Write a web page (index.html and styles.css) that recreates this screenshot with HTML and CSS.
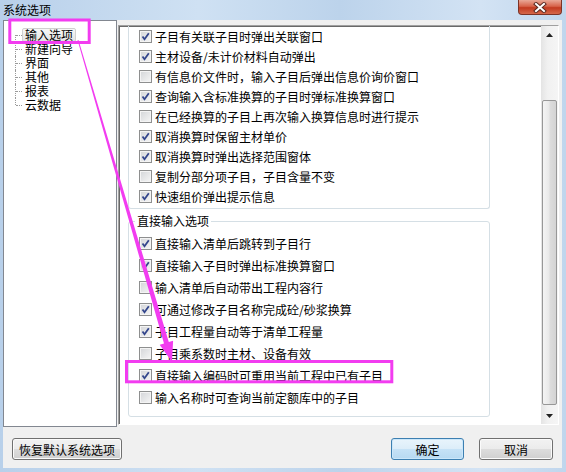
FILE: index.html
```html
<!DOCTYPE html>
<html>
<head>
    <meta charset="utf-8">
    <title>系统选项</title>
    <link rel="stylesheet" href="styles.css">
</head>
<body>
<div class="window">
    <div class="titlebar">
        <span class="title">系统选项</span>
        <div class="close-btn">
            <svg width="14" height="11" viewBox="0 0 14 11">
                <path d="M3 2 L11 9 M11 2 L3 9" stroke="#5b2a22" stroke-width="4" stroke-linecap="square"/>
                <path d="M3 2 L11 9 M11 2 L3 9" stroke="#fff" stroke-width="2" stroke-linecap="square"/>
            </svg>
        </div>
    </div>
    <div class="client">
        <div class="main">
            <div class="tree">
                <ul>
                    <li><span class="node selected">输入选项</span></li>
                    <li><span class="node">新建向导</span></li>
                    <li><span class="node">界面</span></li>
                    <li><span class="node">其他</span></li>
                    <li><span class="node">报表</span></li>
                    <li><span class="node">云数据</span></li>
                </ul>
            </div>
            <div class="panel">
                <div class="content">
                    <div class="group group-first">
                        <div class="row"><span class="cb"><svg viewBox="0 0 11 11"><path d="M2.5 5.5 L4.5 8.2 L8.8 2.2"/></svg></span>子目有关联子目时弹出关联窗口</div>
                        <div class="row"><span class="cb"><svg viewBox="0 0 11 11"><path d="M2.5 5.5 L4.5 8.2 L8.8 2.2"/></svg></span>主材设备/未计价材料自动弹出</div>
                        <div class="row"><span class="cb"></span>有信息价文件时，输入子目后弹出信息价询价窗口</div>
                        <div class="row"><span class="cb"><svg viewBox="0 0 11 11"><path d="M2.5 5.5 L4.5 8.2 L8.8 2.2"/></svg></span>查询输入含标准换算的子目时弹标准换算窗口</div>
                        <div class="row"><span class="cb"></span>在已经换算的子目上再次输入换算信息时进行提示</div>
                        <div class="row"><span class="cb"><svg viewBox="0 0 11 11"><path d="M2.5 5.5 L4.5 8.2 L8.8 2.2"/></svg></span>取消换算时保留主材单价</div>
                        <div class="row"><span class="cb"><svg viewBox="0 0 11 11"><path d="M2.5 5.5 L4.5 8.2 L8.8 2.2"/></svg></span>取消换算时弹出选择范围窗体</div>
                        <div class="row"><span class="cb"></span>复制分部分项子目，子目含量不变</div>
                        <div class="row"><span class="cb"><svg viewBox="0 0 11 11"><path d="M2.5 5.5 L4.5 8.2 L8.8 2.2"/></svg></span>快速组价弹出提示信息</div>
                    </div>
                    <fieldset class="group group-direct">
                        <legend>直接输入选项</legend>
                        <div class="rows">
                            <div class="row"><span class="cb"><svg viewBox="0 0 11 11"><path d="M2.5 5.5 L4.5 8.2 L8.8 2.2"/></svg></span>直接输入清单后跳转到子目行</div>
                            <div class="row"><span class="cb"><svg viewBox="0 0 11 11"><path d="M2.5 5.5 L4.5 8.2 L8.8 2.2"/></svg></span>直接输入子目时弹出标准换算窗口</div>
                            <div class="row"><span class="cb"></span>输入清单后自动带出工程内容行</div>
                            <div class="row"><span class="cb"><svg viewBox="0 0 11 11"><path d="M2.5 5.5 L4.5 8.2 L8.8 2.2"/></svg></span>可通过修改子目名称完成砼/砂浆换算</div>
                            <div class="row"><span class="cb"><svg viewBox="0 0 11 11"><path d="M2.5 5.5 L4.5 8.2 L8.8 2.2"/></svg></span>子目工程量自动等于清单工程量</div>
                            <div class="row"><span class="cb"></span>子目乘系数时主材、设备有效</div>
                            <div class="row"><span class="cb"><svg viewBox="0 0 11 11"><path d="M2.5 5.5 L4.5 8.2 L8.8 2.2"/></svg></span>直接输入编码时可重用当前工程中已有子目</div>
                            <div class="row"><span class="cb"></span>输入名称时可查询当前定额库中的子目</div>
                        </div>
                    </fieldset>
                </div>
                <div class="scrollbar">
                    <div class="sb-btn"><svg width="7" height="4" viewBox="0 0 7 4"><path d="M3.5 0 L7 4 L0 4 Z" fill="#222"/></svg></div>
                    <div class="track"><div class="thumb"></div></div>
                    <div class="sb-btn"><svg width="7" height="4" viewBox="0 0 7 4"><path d="M0 0 L7 0 L3.5 4 Z" fill="#222"/></svg></div>
                </div>
            </div>
        </div>
        <div class="footer">
            <button class="btn btn-reset">恢复默认系统选项</button>
            <button class="btn btn-default">确定</button>
            <button class="btn">取消</button>
        </div>
    </div>
</div>
<svg class="annotations" width="566" height="472" viewBox="0 0 566 472">
    <rect x="9.8" y="20" width="79.4" height="22.5" fill="none" stroke="#f23cf0" stroke-width="3"/>
    <rect x="126.5" y="361.5" width="265.3" height="20.3" fill="none" stroke="#f23cf0" stroke-width="3"/>
    <polygon points="78.5,39.9 168.8,342.1 173.1,340.8 172,362 159.7,344.8 164,343.5 77.5,40.1" fill="#f23cf0"/>
</svg>
</body>
</html>
```

FILE: styles.css
```css
body {
    margin: 0;
    width: 566px;
    height: 472px;
    position: relative;
    overflow: hidden;
    font-family: "Noto Sans CJK SC", "Liberation Sans", sans-serif;
    font-size: 12px;
    color: #000;
    background: #c3d8ee;
}
.window {
    display: flex;
    flex-direction: column;
    height: 472px;
    background: linear-gradient(90deg, #b8d0ea, #cfe1f3 35%, #bcd3eb 60%, #d3e3f4 85%, #c0d6ed);
}
.titlebar {
    height: 20px;
    display: flex;
    justify-content: space-between;
    align-items: flex-start;
    padding: 0 4px 0 3px;
}
.title {
    line-height: 19px;
}
.close-btn {
    width: 44px;
    height: 15px;
    box-sizing: border-box;
    border: 1px solid #7c3326;
    border-top: none;
    border-radius: 0 0 4px 4px;
    background: linear-gradient(#e9a897, #d7634a 45%, #c23a20 55%, #d5684b);
    display: flex;
    justify-content: center;
    align-items: center;
}
.client {
    flex: 1;
    margin: 0 4px 4px 3px;
    background: #f0f0f0;
    display: flex;
    flex-direction: column;
}
.main {
    display: flex;
    height: 407px;
}
.tree {
    width: 114px;
    box-sizing: border-box;
    border: 1px solid #828790;
    background: #fff;
    padding-top: 7px;
}
.tree ul {
    list-style: none;
    margin: 0 0 0 11px;
    padding: 0;
}
.tree li {
    position: relative;
    height: 14px;
    line-height: 14px;
    white-space: nowrap;
}
.tree li::before {
    content: "";
    position: absolute;
    left: 0;
    top: 0;
    bottom: 0;
    border-left: 1px dotted #9a9a9a;
}
.tree li:first-child::before {
    top: 7px;
}
.tree li:last-child::before {
    bottom: 7px;
}
.tree li::after {
    content: "";
    position: absolute;
    left: 1px;
    top: 7px;
    width: 6px;
    border-top: 1px dotted #9a9a9a;
}
.node {
    display: inline-block;
    margin-left: 7px;
    padding: 0 2px;
    border: 1px solid transparent;
    line-height: 12px;
}
.node.selected {
    border-color: #d0d0d0;
    border-radius: 2px;
    background: linear-gradient(#f7f7f7, #e4e4e4);
}
.panel {
    width: 441px;
    height: 400px;
    box-sizing: border-box;
    margin: 5px 0 0 1px;
    border: 1px solid;
    border-color: #a0a0a0 #fff #fff #a0a0a0;
    box-shadow: inset 1px 1px #696969;
    display: flex;
    background: #fff;
}
.content {
    flex: 1;
    overflow: hidden;
    padding-left: 9px;
}
.group {
    width: 362px;
    box-sizing: border-box;
    border: 1px solid #d5dfe5;
}
.group-first {
    border-top: none;
    border-radius: 0 0 3px 3px;
    padding: 0 0 2px 10px;
}
.row {
    display: flex;
    align-items: center;
    gap: 3px;
    height: 20px;
    white-space: nowrap;
}
.cb {
    width: 13px;
    height: 13px;
    box-sizing: border-box;
    border: 1px solid #8e8f8f;
    background: linear-gradient(135deg, #d3d5d8, #f6f6f6);
    box-shadow: inset 0 0 0 1px #f4f4f4;
    flex: none;
}
.cb svg {
    display: block;
    width: 11px;
    height: 11px;
}
.cb path {
    fill: none;
    stroke: #33468c;
    stroke-width: 1.8;
}
.group-direct {
    margin: 4px 0 0 0;
    padding: 3px 0 8px 0;
    border-radius: 3px;
    min-width: 0;
}
.group-direct legend {
    margin-left: 6px;
    padding: 0 2px;
    line-height: 16px;
}
.group-direct .rows {
    padding-left: 10px;
}
.group-direct .row {
    height: 22px;
}
.scrollbar {
    width: 17px;
    display: flex;
    flex-direction: column;
    background: linear-gradient(90deg, #e4e4e4, #f1f1f1 40%, #f5f5f5);
}
.sb-btn {
    height: 17px;
    display: flex;
    justify-content: center;
    align-items: center;
}
.track {
    flex: 1;
    padding-top: 57px;
}
.thumb {
    height: 305px;
    box-sizing: border-box;
    margin: 0 1px;
    border: 1px solid #979797;
    border-radius: 2px;
    background: linear-gradient(90deg, #f4f4f4, #e9e9e9 45%, #dcdcdc 55%, #d3d3d3);
}
.footer {
    flex: 1;
    display: flex;
    align-items: flex-start;
    gap: 15px;
    padding: 11px 9px 0 9px;
}
.btn {
    height: 22px;
    width: 74px;
    padding: 0;
    font-family: inherit;
    font-size: 12px;
    color: #000;
    border: 1px solid #707070;
    border-radius: 3px;
    background: linear-gradient(#f2f2f2, #ebebeb 50%, #dddddd 50%, #cfcfcf);
    box-shadow: inset 0 0 0 1px #fbfbfb;
}
.btn-reset {
    width: 110px;
}
.btn-default {
    margin-left: auto;
    width: 73px;
    border-color: #3c7fb1;
    background: linear-gradient(#e8f4fc, #dcedf9 50%, #c6e2f6 50%, #b7d9f1);
    box-shadow: inset 0 0 0 1px #cbe7fa;
}
.annotations {
    position: absolute;
    left: 0;
    top: 0;
    pointer-events: none;
}
```
